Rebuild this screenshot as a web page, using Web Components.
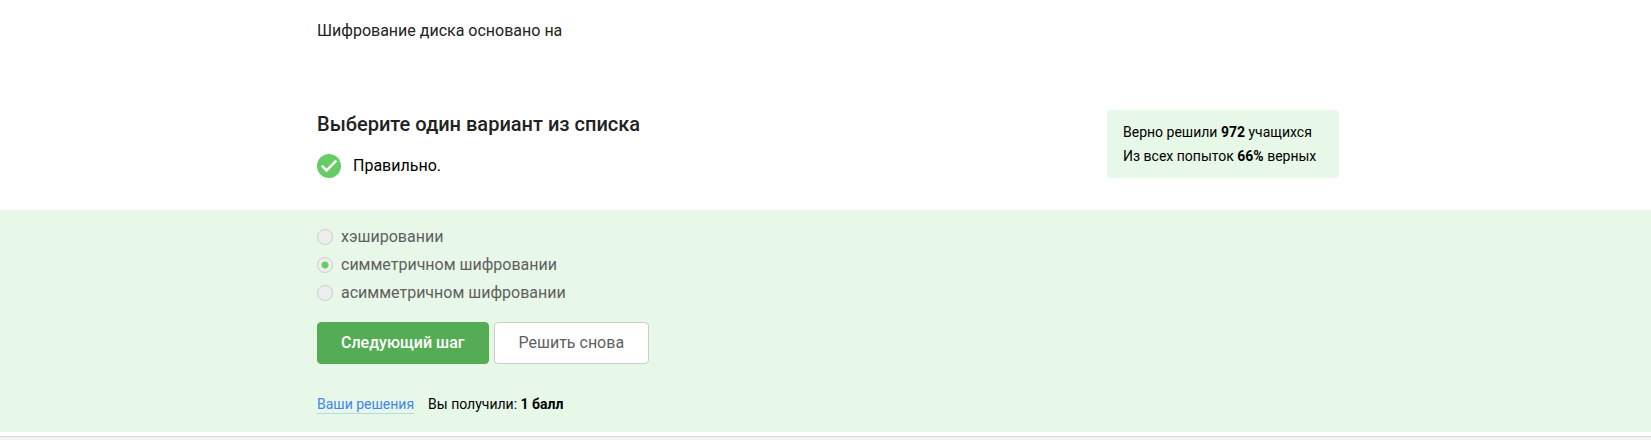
<!DOCTYPE html>
<html lang="ru">
<head>
<meta charset="utf-8">
<title>Шифрование диска</title>
<style>
  body { margin: 0; background: #fff; color: #000; font: 16px/24px Roboto, "Liberation Sans", sans-serif; }
</style>
</head>
<body>
<quiz-step></quiz-step>

<template id="quiz-step">
  <style>
    :host { display: flex; flex-direction: column; min-height: 100vh; }
    p { margin: 0; color: #222; }
    .question { padding: 19px 0 67px; }
    .head { display: flex; justify-content: space-between; align-items: flex-start; padding-bottom: 32px; }
    h2 { margin: 0 0 16px; font-size: 20px; line-height: 28px; font-weight: 500; color: #222; }
    .attempt { background: #e7f8e8; padding: 15px 0 16px; }
    fieldset { border: 0; margin: 0; padding: 0; display: grid; gap: 4px; }
    .actions { display: flex; gap: 5px; margin: 17px 0 28px; }
    .result { display: flex; gap: 14px; font-size: 14px; line-height: 24px; }
    a { color: #4485ed; text-decoration: none; line-height: 18px; margin: 3px 0 2px; border-bottom: 1px solid #b0dcf0; }
    b { font-weight: 700; }
    footer { flex: 1; margin-top: 4px; border-top: 1px solid #d9d9d9; background: #f2f2f2; }
  </style>
  <content-width><p class="question">Шифрование диска основано на</p></content-width>
  <content-width>
    <div class="head">
      <div>
        <h2>Выберите один вариант из списка</h2>
        <status-hint>Правильно.</status-hint>
      </div>
      <step-stats>
        <div>Верно решили <b>972</b> учащихся</div>
        <div>Из всех попыток <b>66%</b> верных</div>
      </step-stats>
    </div>
  </content-width>
  <div class="attempt">
    <content-width>
      <fieldset aria-label="Варианты ответа">
        <choice-option>хэшировании</choice-option>
        <choice-option checked>симметричном шифровании</choice-option>
        <choice-option>асимметричном шифровании</choice-option>
      </fieldset>
      <div class="actions">
        <action-button primary>Следующий шаг</action-button>
        <action-button>Решить снова</action-button>
      </div>
      <div class="result">
        <a href="#solutions">Ваши решения</a>
        <span>Вы получили: <b>1 балл</b></span>
      </div>
    </content-width>
  </div>
  <footer></footer>
</template>

<template id="content-width">
  <style>
    :host { display: block; box-sizing: border-box; width: 100%; max-width: 1027px; margin: 0 auto; padding-left: 5px; }
  </style>
  <slot></slot>
</template>

<template id="status-hint">
  <style>
    :host { display: flex; align-items: center; gap: 12px; }
    svg { display: block; width: 24px; height: 24px; }
  </style>
  <svg viewBox="0 0 24 24" aria-hidden="true">
    <circle cx="12" cy="12" r="12" fill="#66cc66"/>
    <path d="M4.8 11.6 9.6 16.4 19.3 6.7" fill="none" stroke="#fff" stroke-width="2.5"/>
  </svg>
  <span><slot></slot></span>
</template>

<template id="step-stats">
  <style>
    :host { display: block; min-width: 200px; padding: 10px 16px; border-radius: 4px; background: #e7f8e8; font-size: 14px; line-height: 24px; }
  </style>
  <slot></slot>
</template>

<template id="choice-option">
  <style>
    :host { display: block; color: #5f5f5f; }
    label { display: flex; align-items: center; gap: 8px; width: fit-content; }
    input { appearance: none; box-sizing: border-box; width: 16px; height: 16px; margin: 0; border: 1px solid #ccc; border-radius: 50%; background: #eee; }
    input:checked { background: radial-gradient(circle, #66cc66 3px, #eee 4px); }
  </style>
  <label><input type="radio" name="answer"><span><slot></slot></span></label>
</template>

<template id="action-button">
  <style>
    :host { display: block; }
    button { display: block; font: inherit; padding: 8px 24px; border: 1px solid #ccc; border-radius: 4px; background: #fff; color: #5f5f5f; cursor: pointer; }
    :host([primary]) button { padding: 8px 23px; border-color: #54ad54; background: #54ad54; color: #fff; font-weight: 500; }
  </style>
  <button type="button"><slot></slot></button>
</template>

<script>
  class TemplateElement extends HTMLElement {
    constructor() {
      super();
      const template = document.getElementById(this.localName);
      this.attachShadow({ mode: "open" }).append(template.content.cloneNode(true));
    }
  }

  class ChoiceOption extends TemplateElement {
    connectedCallback() {
      const input = this.shadowRoot.querySelector("input");
      input.checked = this.hasAttribute("checked");
      input.addEventListener("change", () => {
        for (const other of this.parentElement.querySelectorAll("choice-option")) {
          other.shadowRoot.querySelector("input").checked = other === this;
        }
      });
    }
  }

  customElements.define("content-width", class extends TemplateElement {});
  customElements.define("status-hint", class extends TemplateElement {});
  customElements.define("step-stats", class extends TemplateElement {});
  customElements.define("choice-option", ChoiceOption);
  customElements.define("action-button", class extends TemplateElement {});
  customElements.define("quiz-step", class extends TemplateElement {});
</script>
</body>
</html>
